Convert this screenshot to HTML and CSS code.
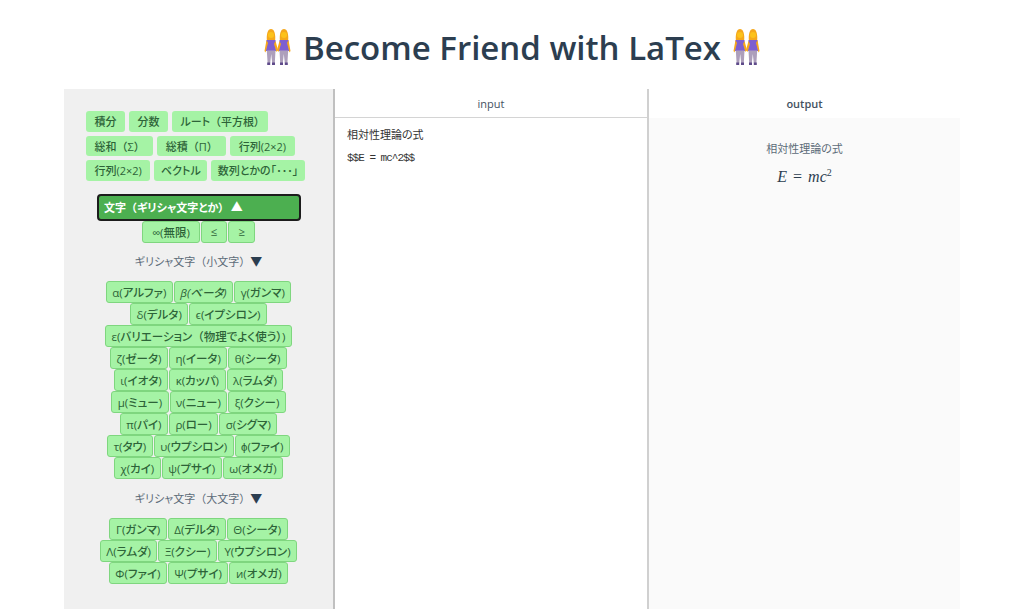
FILE: index.html
```html
<!DOCTYPE html>
<html lang="en">
<head>
    <meta charset="UTF-8">
    <meta name="viewport" content="width=device-width, initial-scale=1.0">
    <title>Become Friend with LaTex</title>
    <link rel="stylesheet" href="styles.css">
</head>
<body>
    <svg class="defs" width="0" height="0">
        <symbol id="friends" viewBox="0 0 27 36">
            <g id="left-girl">
                <path d="M3 13C2 4 4 0 7 0s5 4 4 13z" fill="#f5a81c"/>
                <circle cx="7" cy="6" r="3" fill="#fcc21b"/>
                <path d="M2.500 11h9l.5 11H2z" fill="#7e5fd0"/>
                <path d="M2.500 11 .5 22l1 1.500L4 14zM11.500 12l2.500 9-1.500 2-2.500-8z" fill="#f7a81b"/>
                <path d="M2.800 21.500h8.700l-.7 12.500H8.200L7.200 25l-1 9H3.600z" fill="#ad9fbb"/>
                <path d="M3.200 33.500h3V36h-3zM8 33.500h3V36H8z" fill="#5e4a8a"/>
            </g>
            <use href="#left-girl" transform="translate(27 0) scale(-1 1)"/>
        </symbol>
    </svg>

    <h1 class="title">
        <svg class="emoji"><use href="#friends"/></svg>
        <span>Become Friend with LaTex</span>
        <svg class="emoji"><use href="#friends"/></svg>
    </h1>

    <div class="container">
        <div class="sidebar">
            <div class="basic-buttons">
                <div class="basic-row">
                    <button class="basic">積分</button>
                    <button class="basic">分数</button>
                    <button class="basic">ルート<span class="wide">（</span>平方根）</button>
                </div>
                <div class="basic-row">
                    <button class="basic">総和<span class="wide">（</span>Σ<span class="wide">）</span></button>
                    <button class="basic">総積<span class="wide">（</span>Π<span class="wide">）</span></button>
                    <button class="basic">行列(2×2)</button>
                </div>
                <div class="basic-row">
                    <button class="basic">行列(2×2)</button>
                    <button class="basic tight">ベクトル</button>
                    <button class="basic tight">数列とかの「･･･」</button>
                </div>
            </div>

            <button class="accordion">文字<span class="wide">（</span>ギリシャ文字とか） <span class="triangle">▲</span></button>
            <div class="symbols">
                <div class="symbol-row"><button class="symbol roomy">∞(無限)</button><button class="symbol roomy">≤</button><button class="symbol roomy">≥</button></div>
            </div>

            <div class="group-title">ギリシャ文字<span class="wide">（</span>小文字<span class="wide">）</span><span class="triangle-dark">▼</span></div>
            <div class="symbols">
                <div class="symbol-row"><button class="symbol">α(アルファ)</button><button class="symbol italic">β(ベータ)</button><button class="symbol">γ(ガンマ)</button></div>
                <div class="symbol-row"><button class="symbol">δ(デルタ)</button><button class="symbol">ϵ(イプシロン)</button></div>
                <div class="symbol-row"><button class="symbol">ε(バリエーション<span class="wide">（</span>物理でよく使う）)</button></div>
                <div class="symbol-row"><button class="symbol">ζ(ゼータ)</button><button class="symbol">η(イータ)</button><button class="symbol">θ(シータ)</button></div>
                <div class="symbol-row"><button class="symbol">ι(イオタ)</button><button class="symbol">κ(カッパ)</button><button class="symbol">λ(ラムダ)</button></div>
                <div class="symbol-row"><button class="symbol">μ(ミュー)</button><button class="symbol">ν(ニュー)</button><button class="symbol">ξ(クシー)</button></div>
                <div class="symbol-row"><button class="symbol">π(パイ)</button><button class="symbol">ρ(ロー)</button><button class="symbol">σ(シグマ)</button></div>
                <div class="symbol-row"><button class="symbol">τ(タウ)</button><button class="symbol">υ(ウプシロン)</button><button class="symbol">ϕ(ファイ)</button></div>
                <div class="symbol-row"><button class="symbol">χ(カイ)</button><button class="symbol">ψ(プサイ)</button><button class="symbol">ω(オメガ)</button></div>
            </div>

            <div class="group-title">ギリシャ文字<span class="wide">（</span>大文字<span class="wide">）</span><span class="triangle-dark">▼</span></div>
            <div class="symbols">
                <div class="symbol-row"><button class="symbol">Γ(ガンマ)</button><button class="symbol">Δ(デルタ)</button><button class="symbol">Θ(シータ)</button></div>
                <div class="symbol-row"><button class="symbol">Λ(ラムダ)</button><button class="symbol">Ξ(クシー)</button><button class="symbol">Υ(ウプシロン)</button></div>
                <div class="symbol-row"><button class="symbol">Φ(ファイ)</button><button class="symbol">Ψ(プサイ)</button><button class="symbol">и(オメガ)</button></div>
            </div>
        </div>

        <div class="panel input-panel">
            <div class="panel-head">input</div>
            <div class="editor">
                <p class="editor-text">相対性理論の式</p>
                <p class="editor-code">$$E = mc^2$$</p>
            </div>
        </div>

        <div class="panel output-panel">
            <div class="panel-head">output</div>
            <div class="preview">
                <p class="preview-text">相対性理論の式</p>
                <p class="formula"><i>E</i> = <i>mc</i><sup>2</sup></p>
            </div>
        </div>
    </div>
</body>
</html>
```
FILE: styles.css
```css
* {
    margin: 0;
    padding: 0;
    box-sizing: border-box;
}

body {
    font-family: "Open Sans", "Noto Sans CJK JP", sans-serif;
    font-feature-settings: "palt";
    background-color: #ffffff;
    color: #2c3e50;
    height: 609px;
    overflow: hidden;
}

.defs {
    position: absolute;
}

.title {
    display: flex;
    justify-content: center;
    align-items: center;
    gap: 12px;
    height: 89px;
    padding-top: 5px;
    font-size: 33px;
    font-weight: 600;
    color: #2c3e50;
}

.emoji {
    width: 27px;
    height: 36px;
}

.container {
    display: flex;
    width: 896px;
    height: 520px;
    margin-left: 64px;
}

.sidebar {
    width: 269px;
    background-color: #f0f0f0;
    padding: 22px 22px 0;
    text-align: center;
}

.basic-buttons {
    display: flex;
    flex-direction: column;
    gap: 4px;
}

.basic-row {
    display: flex;
    gap: 4px;
}

button {
    font-family: "Open Sans", "Noto Sans CJK JP", sans-serif;
    font-feature-settings: "palt";
    color: #2d6338;
}

/* full width brackets, palt makes them too narrow */
.wide {
    font-feature-settings: normal;
}

.basic {
    height: 20.500px;
    padding: 0 8.500px;
    border: none;
    border-radius: 3px;
    background-color: #a5f3a5;
    font-size: 11px;
    font-weight: 500;
    white-space: nowrap;
}

.basic.tight {
    padding: 0 6.500px;
}

.accordion {
    display: block;
    width: 204px;
    height: 27px;
    margin: 13px 0 0 11px;
    padding-left: 5px;
    text-align: left;
    background-color: #4caf50;
    border: 2px solid #1c1c1c;
    border-radius: 4px;
    color: #ffffff;
    font-size: 11px;
    font-weight: 600;
}

.triangle {
    margin-left: 4px;
    font-size: 12px;
}

.symbols {
    line-height: 0;
}

.symbol-row {
    display: flex;
    justify-content: center;
}

.symbol {
    height: 22px;
    padding: 0 5.500px;
    margin: 0 0.500px;
    background-color: #a5f3a5;
    border: 1px solid #7fd67f;
    border-radius: 3px;
    font-size: 11.500px;
    font-weight: 500;
    white-space: nowrap;
    vertical-align: top;
}

.symbol.roomy {
    padding: 0 9px;
}

.italic {
    font-style: italic;
}

.group-title {
    height: 20px;
    margin: 9.500px 0 9px;
    line-height: 20px;
    font-size: 11px;
    color: #5c6b78;
}

.triangle-dark {
    color: #2c3e50;
    font-size: 12px;
}

.panel {
    width: 314px;
}

.input-panel {
    border-left: 2px solid #c0c0c0;
}

.output-panel {
    width: 313px;
    border-left: 2px solid #d0d0d0;
}

.panel-head {
    height: 29px;
    line-height: 29px;
    text-align: center;
    font-size: 11px;
    font-weight: 600;
    color: #44525f;
}

.input-panel .panel-head {
    font-weight: 400;
    border-bottom: 1px solid #d4d4d4;
}

.editor {
    height: 491px;
    padding: 8px 12px;
    font-size: 11px;
    color: #333333;
}

.editor-text {
    height: 17px;
    line-height: 17px;
}

.editor-code {
    margin-top: 7px;
    line-height: 17px;
    font-family: "Liberation Mono", monospace;
    font-size: 11px;
    letter-spacing: -1px;
}

.preview {
    height: 491px;
    padding-top: 23px;
    background-color: #fafafa;
    text-align: center;
}

.preview-text {
    font-size: 11px;
    line-height: 16px;
    color: #5c6b78;
}

.formula {
    margin-top: 6px;
    font-family: "Liberation Serif", serif;
    font-size: 16px;
    line-height: 20px;
    word-spacing: 2px;
    color: #2c3e50;
}

.formula sup {
    font-size: 10px;
}
```
